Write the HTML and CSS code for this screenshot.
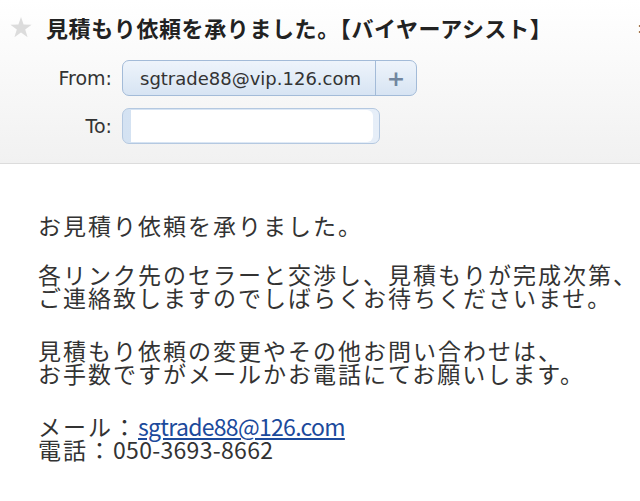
FILE: index.html
```html
<!DOCTYPE html>
<html lang="ja">
  <head>
    <meta charset="UTF-8">
    <meta name="viewport" content="width=device-width, initial-scale=1.0">
    <title>見積もり依頼を承りました。</title>
    <link rel="stylesheet" href="styles.css">
  </head>
  <body>
    <header class="mail-head">
      <div class="subject">
        <svg class="star" width="22" height="21" viewBox="0 0 22 21">
          <polygon points="11,0 13.6,7.6 21.6,7.7 15.2,12.5 17.6,20.2 11,15.6 4.4,20.2 6.8,12.5 0.4,7.7 8.4,7.6" fill="#dcdcdc"/>
        </svg>
        <h1>見積もり依頼を承りました。【バイヤーアシスト】</h1>
        <span class="cut">:</span>
      </div>
      <div class="field-row">
        <span class="field-label">From:</span>
        <div class="from-pill">
          <span class="addr">sgtrade88@vip.126.com</span>
          <span class="add-btn">+</span>
        </div>
      </div>
      <div class="field-row">
        <span class="field-label">To:</span>
        <div class="to-box">
          <div class="to-input"></div>
        </div>
      </div>
    </header>
    <main class="mail-body">
      <p>お見積り依頼を承りました。</p>
      <p>各リンク先のセラーと交渉し、見積もりが完成次第、<br>ご連絡致しますのでしばらくお待ちくださいませ。</p>
      <p>見積もり依頼の変更やその他お問い合わせは、<br>お手数ですがメールかお電話にてお願いします。</p>
      <p>メール：<a class="mail-link" href="mailto:sgtrade88@126.com">sgtrade88@126.com</a><br>電話：<span class="tel">050-3693-8662</span></p>
    </main>
  </body>
</html>
```

FILE: styles.css
```css
body {
  margin: 0;
  background: #fff;
  color: #333;
  font-family: "Noto Sans CJK JP", "DejaVu Sans", sans-serif;
  overflow: hidden;
}
.mail-head {
  padding: 12px 0 19px;
  background: linear-gradient(to bottom, #fff, #f1f1f1);
  border-bottom: 1px solid #dcdcdc;
}
.subject {
  display: flex;
  align-items: center;
  height: 30px;
  padding-left: 10px;
}
.star {
  flex-shrink: 0;
  margin-right: 14px;
}
.subject h1 {
  margin: 0;
  flex: 1;
  font-size: 22px;
  font-weight: bold;
  color: #222;
  white-space: nowrap;
  letter-spacing: 0.6px;
}
.cut {
  width: 2px;
  overflow: hidden;
  font-size: 14px;
  color: #555;
}
.field-row {
  display: flex;
  align-items: center;
  margin-top: 18px;
}
.field-row + .field-row {
  margin-top: 12px;
}
.field-label {
  width: 112px;
  margin-right: 10px;
  text-align: right;
  font-family: "DejaVu Sans", sans-serif;
  font-size: 19px;
  color: #333;
}
.from-pill {
  display: flex;
  height: 34px;
  border: 1px solid #a3bbd8;
  border-radius: 7px;
  background: linear-gradient(to bottom, #eef4fb, #d7e4f3);
}
.addr {
  display: flex;
  align-items: center;
  padding: 0 14px 0 17px;
  font-family: "DejaVu Sans", sans-serif;
  font-size: 18px;
  color: #333;
  border-right: 1px solid #a3bbd8;
}
.add-btn {
  display: flex;
  align-items: center;
  justify-content: center;
  width: 40px;
  font-family: "DejaVu Sans", sans-serif;
  font-size: 22px;
  font-weight: bold;
  color: #71869f;
}
.to-box {
  width: 258px;
  height: 36px;
  box-sizing: border-box;
  padding: 1px 6px 1px 8px;
  border: 1px solid #b4c8e0;
  border-radius: 7px;
  background: linear-gradient(to right, #d4e2f2, #e6eef8);
}
.to-input {
  height: 100%;
  background: #fff;
  border-radius: 0 6px 6px 0;
}
.mail-body {
  padding: 50px 0 0 38px;
  font-size: 23px;
  line-height: 23px;
  letter-spacing: 2px;
  color: #333;
}
.mail-body p {
  margin: 0 0 30px;
  white-space: nowrap;
}
.mail-body p:first-child {
  margin-bottom: 26px;
}
.mail-link {
  color: #1c4a9c;
  letter-spacing: -0.7px;
}
.tel {
  letter-spacing: 0.3px;
}
```
